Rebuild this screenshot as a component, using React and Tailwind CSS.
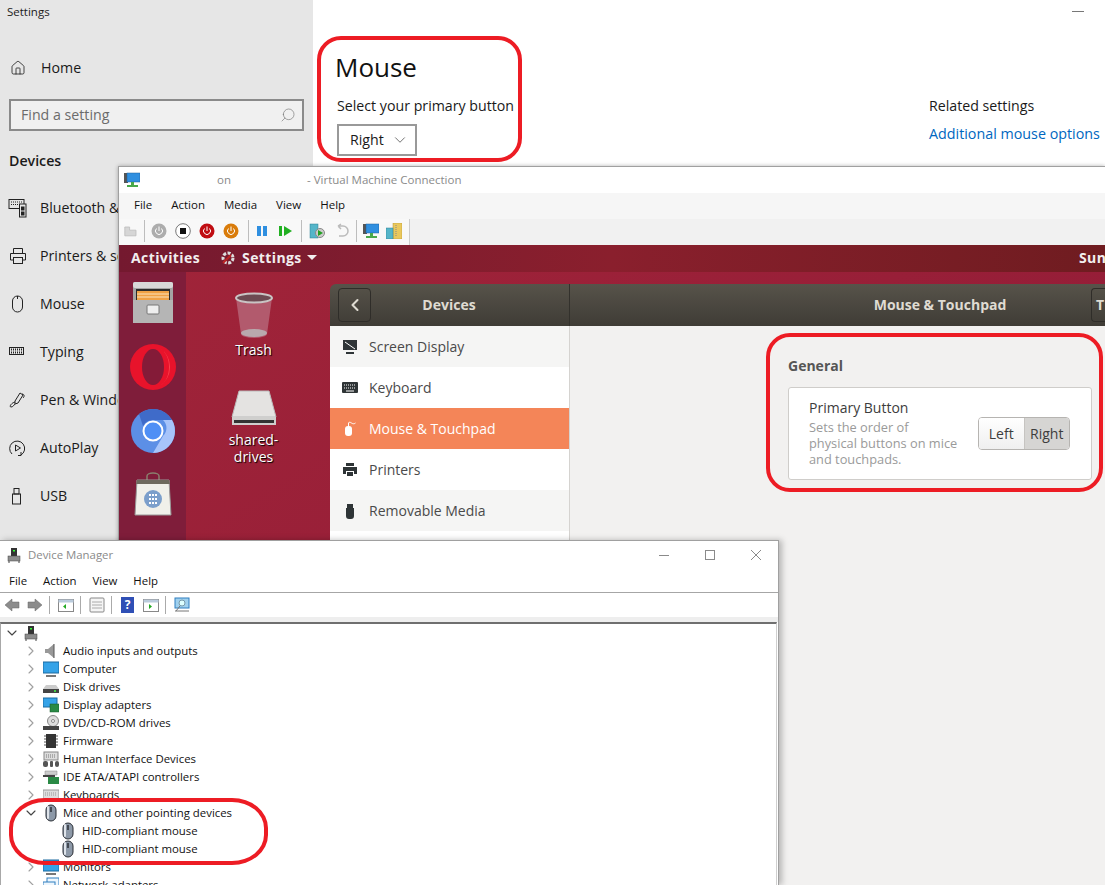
import React from 'react';
import { ChevronRight, ChevronDown, ChevronLeft, Search, Home } from 'lucide-react';

const segoe = { fontFamily: '"Open Sans", "Noto Sans", sans-serif' };

const Win = ({ children, className = '' }) => (
  <svg viewBox="0 0 20 20" fill="none" stroke="#222" strokeWidth="1" className={`w-5 h-5 ${className}`}>{children}</svg>
);

const sideItems = [
  {
    label: 'Bluetooth & other devices',
    icon: <Win><rect x="1" y="1.500" width="15" height="9" /><path d="M3 4h11M3 6.500h11" strokeDasharray="1 1" /><rect x="11.500" y="6" width="6.500" height="13" fill="#e6e6e6" /><rect x="13.500" y="9" width="2.500" height="3" fill="#222" /><rect x="13.500" y="14" width="2.500" height="3" fill="#222" /></Win>,
  },
  {
    label: 'Printers & scanners',
    icon: <Win><path d="M5.500 7V2.500h9V7M5.500 14H2.500V7.500h15V14h-3" /><rect x="5.500" y="11.500" width="9" height="6" /></Win>,
  },
  {
    label: 'Mouse',
    icon: <Win><rect x="4.500" y="2" width="10" height="16" rx="5" /><path d="M9.500 2v3" /></Win>,
  },
  {
    label: 'Typing',
    icon: <Win><rect x="1.500" y="5.500" width="14" height="7" /><path d="M3 7.500h11M3 10.500h11" strokeWidth="2" strokeDasharray="1 1" /></Win>,
  },
  {
    label: 'Pen & Windows Ink',
    icon: <Win><path d="M7 11l5-8 3 2-5 8-3 1z" /><path d="M7 12c-4 1-6 5-4 5 2 0 3-2 4-3M14 4c2 0 3 2 1 4" /></Win>,
  },
  {
    label: 'AutoPlay',
    icon: <Win><path d="M4 16A7.500 7.500 0 1 1 13 17" /><path d="M7.500 7v6l5-3z" /><path d="M13 14v3.500h-3" /></Win>,
  },
  {
    label: 'USB',
    icon: <Win><rect x="4.500" y="8" width="8" height="10" /><rect x="6" y="2.500" width="5" height="5.500" /></Win>,
  },
];

const SettingsSidebar = () => (
  <aside className="w-[313px] h-full shrink-0 bg-[#e6e6e6] text-[#1a1a1a]">
    <div className="h-[44px] pl-[7px] text-[11.500px] leading-[24px]">Settings</div>
    <div className="h-[48px] flex items-center pl-[10px] gap-[15px] text-[14.200px]">
      <Home className="w-4 h-4" strokeWidth={1.200} />
      <span>Home</span>
    </div>
    <div className="mx-[9px] mt-[7px] h-[32px] border-2 border-[#8a8a8a] bg-[#f0f0f0] flex items-center justify-between pl-[10px] pr-[6px] text-[14.200px] text-[#6b6b6b]">
      <span>Find a setting</span>
      <Search className="w-4 h-4 -scale-x-100 text-[#777]" strokeWidth={1} />
    </div>
    <div className="pl-[9px] mt-[19px] h-[22px] leading-[22px] text-[14.200px] font-semibold">Devices</div>
    <div className="mt-[12px]">
      {sideItems.map((item) => (
        <div key={item.label} className="h-[48px] flex items-center pl-[8px] gap-[12px] text-[14.200px] whitespace-nowrap">
          {item.icon}
          <span>{item.label}</span>
        </div>
      ))}
    </div>
  </aside>
);

const MouseMain = () => (
  <main className="flex-1 h-full bg-white relative text-[#1a1a1a]">
    <div className="flex justify-end pr-[21px] pt-[11px]">
      <div className="w-[12px] h-px bg-[#777]" />
    </div>
    <div className="flex pt-[28px]">
      <div className="w-[616px] pl-[22px]">
        <div className="text-[26px] leading-[54px] pb-[2px] text-[#111]">Mouse</div>
        <div className="pl-[2px] text-[14.200px] leading-[20px] whitespace-nowrap">Select your primary button</div>
        <div className="ml-[2px] mt-[8px] w-[80px] h-[32px] border-2 border-[#999] flex items-center justify-between pl-[11px] pr-[6px] text-[14.200px]">
          <span>Right</span>
          <ChevronDown className="w-[18px] h-[18px] text-[#444]" strokeWidth={1} />
        </div>
      </div>
      <div className="pt-[56px] whitespace-nowrap">
        <div className="text-[14.200px] leading-[20px]">Related settings</div>
        <div className="mt-[8px] text-[14.300px] leading-[20px] text-[#0067c0]">Additional mouse options</div>
      </div>
    </div>
  </main>
);

const Power = ({ bg, ring = 'none', fg = '#fff' }) => (
  <svg viewBox="0 0 16 16" className="w-4 h-4">
    <circle cx="8" cy="8" r="7.500" fill={bg} stroke={ring} />
    <path d="M5.500 5.500a3.500 3.500 0 1 0 5 0M8 3.500V8" fill="none" stroke={fg} strokeWidth="1" />
  </svg>
);

const Sep = () => <div className="w-px h-[22px] bg-[#bdbdbd]" />;

const Net = () => (
  <svg viewBox="0 0 16 16" className="w-4 h-4">
    <rect x="0" y="1" width="4" height="10" fill="#555" />
    <rect x="3" y="1" width="13" height="9" fill="#2f8fe0" stroke="#1c5f9c" strokeWidth=".5" />
    <rect x="7" y="10" width="3" height="3" fill="#49a84a" />
    <rect x="3" y="13" width="11" height="2" fill="#49a84a" />
  </svg>
);

const VmToolbar = () => (
  <div className="h-[26px] shrink-0 flex bg-[#f1f1f1]">
    <div className="w-[291px] h-full bg-[#f8f8f8] border-r border-[#ccc] flex items-center pl-[5px] pb-[2px]">
      <svg viewBox="0 0 16 16" className="w-4 h-4 mr-[7px]">
        <path d="M1 7V3h6v4h8v7H1z" fill="#d6d6d6" stroke="#bbb" />
      </svg>
      <Sep />
      <div className="flex items-center gap-[8px] ml-[6px] mr-[9px]">
        <Power bg="#adadad" />
        <svg viewBox="0 0 16 16" className="w-4 h-4"><circle cx="8" cy="8" r="7.300" fill="#fff" stroke="#777" /><rect x="5" y="5" width="6" height="6" fill="#111" /></svg>
        <Power bg="#c00d12" />
        <Power bg="#d97c0b" />
      </div>
      <Sep />
      <div className="flex items-center gap-[8px] ml-[6px] mr-[7px]">
        <svg viewBox="0 0 16 16" className="w-4 h-4"><rect x="3" y="3" width="4" height="10" fill="#2f8fe0" /><rect x="9" y="3" width="4" height="10" fill="#2f8fe0" /></svg>
        <svg viewBox="0 0 16 16" className="w-4 h-4"><rect x="1" y="3" width="3" height="10" fill="#22b022" /><path d="M6 3l8 5-8 5z" fill="#22b022" /></svg>
      </div>
      <Sep />
      <div className="flex items-center gap-[8px] ml-[7px] mr-[7px]">
        <svg viewBox="0 0 16 16" className="w-4 h-4"><rect x="1" y="1" width="8" height="14" fill="#55b5c9" stroke="#2c7f92" strokeWidth=".5" /><circle cx="11" cy="10" r="4.500" fill="#ccc" stroke="#888" /><path d="M9 7l5 3-5 3z" fill="#22a022" /></svg>
        <svg viewBox="0 0 16 16" className="w-4 h-4"><path d="M5 3h5a3.500 3.500 0 0 1 0 10H6M5 3l3-2M5 3l3 3" fill="none" stroke="#bbb" strokeWidth="1.500" /></svg>
      </div>
      <Sep />
      <div className="flex items-center gap-[7px] ml-[6px] mr-[7px]">
        <Net />
        <svg viewBox="0 0 16 16" className="w-4 h-4"><rect x="7" y="0" width="9" height="16" fill="#eac85c" stroke="#b59430" strokeWidth=".5" /><rect x="0" y="5" width="7" height="11" fill="#55b5c9" stroke="#2c7f92" strokeWidth=".5" /><path d="M10 2v12" stroke="#888" strokeDasharray="1 1" /></svg>
      </div>
    </div>
  </div>
);

const Dock = () => (
  <div className="w-[67px] h-full bg-[#7f1d3a] flex flex-col items-center pt-[9px] shrink-0">
    <svg viewBox="0 0 44 44" className="w-[44px] h-[44px] shrink-0">
      <rect x="2" y="1" width="40" height="41" rx="2" fill="#a4a4a4" />
      <rect x="2" y="1" width="40" height="6" rx="2" fill="#d8d8d8" />
      <rect x="5" y="8" width="34" height="11" fill="#2b2b2b" />
      <rect x="6" y="10" width="32" height="9" fill="#f0a145" />
      <path d="M6 13h32M6 16h32" stroke="#fbe2bd" />
      <rect x="2" y="19" width="40" height="23" fill="#b5b5b5" />
      <rect x="16" y="24" width="12" height="9" rx="1" fill="#eee" stroke="#777" />
    </svg>
    <svg viewBox="0 0 46 46" className="w-[46px] h-[46px] mt-[19px] shrink-0">
      <circle cx="23" cy="23" r="23" fill="#e8132b" />
      <ellipse cx="23" cy="23" rx="11" ry="18" fill="#841b38" />
      <path d="M30 4a23 23 0 0 1 0 38c6-4 9-11 9-19s-3-15-9-19z" fill="#f9434f" />
    </svg>
    <svg viewBox="0 0 44 44" className="w-[44px] h-[44px] mt-[19px] shrink-0">
      <circle cx="22" cy="22" r="22" fill="#5c8fe6" />
      <path d="M8 5a22 22 0 0 1 33 6H22a11 11 0 0 0-10 6z" fill="#3f6bc9" />
      <path d="M41 11a22 22 0 0 1-19 33l10-17a11 11 0 0 0 0-16z" fill="#a7c4fa" />
      <circle cx="22" cy="22" r="9.500" fill="#4f8ff5" stroke="#fff" strokeWidth="2" />
    </svg>
    <svg viewBox="0 0 38 44" className="w-[38px] h-[44px] mt-[19px] shrink-0">
      <path d="M13 8V4a6 3 0 0 1 12 0v4" fill="none" stroke="#8a7f6e" strokeWidth="1.500" />
      <path d="M3 8h32l2 35H1z" fill="#f0f0ea" stroke="#999" />
      <path d="M3 8h32l1 4H2z" fill="#6e6a5e" />
      <circle cx="19" cy="27" r="9" fill="#7b9fcb" />
      <path d="M15 23h8M15 27h8M15 31h8" stroke="#fff" strokeWidth="2" strokeDasharray="2 1" />
    </svg>
  </div>
);

const DesktopLabel = ({ children }) => (
  <span className="text-[14px] leading-[17px] text-white text-center [text-shadow:1px_1px_1px_#000] w-[70px]">{children}</span>
);

const GnomeSidebar = () => {
  const rows = [
    { label: 'Screen Display', tint: 'bg-[#f5f5f4] text-[#4a4a4a]', icon: <svg viewBox="0 0 16 16" className="w-4 h-4"><path d="M1 1h14v10H1zM4 13h8v2H4z" fill="#2e3436" /><path d="M3 3l10 7" stroke="#fff" /></svg> },
    { label: 'Keyboard', tint: 'bg-white text-[#4a4a4a]', icon: <svg viewBox="0 0 16 16" className="w-4 h-4"><rect y="2" width="16" height="11" rx="1" fill="#2e3436" /><path d="M2 5h12M2 8h12" stroke="#fff" strokeDasharray="1 1" /><path d="M4 11h8" stroke="#fff" /></svg> },
    { label: 'Mouse & Touchpad', tint: 'bg-[#f48558] text-white', icon: <svg viewBox="0 0 16 16" className="w-4 h-4"><rect x="3" y="5" width="7" height="10" rx="3" fill="#fff" /><path d="M6.500 5V2c0-1 2-1 3 0s3 1 4 0" fill="none" stroke="#fff" /></svg> },
    { label: 'Printers', tint: 'bg-white text-[#4a4a4a]', icon: <svg viewBox="0 0 16 16" className="w-4 h-4"><path d="M4 1h8v3H4zM1 5h14v7h-3V9H4v3H1z" fill="#2e3436" /><rect x="5" y="10" width="6" height="4" fill="#2e3436" /></svg> },
    { label: 'Removable Media', tint: 'bg-[#f5f5f4] text-[#4a4a4a]', icon: <svg viewBox="0 0 16 16" className="w-4 h-4"><path d="M5 1h6v4H5zM4 5h8v8a3 3 0 0 1-3 3H7a3 3 0 0 1-3-3z" fill="#2e3436" /></svg> },
  ];
  return (
    <div className="w-[240px] h-full bg-white border-r border-[#d5d3d0] shrink-0">
      {rows.map((row) => (
        <div key={row.label} className={`h-[41px] flex items-center pl-[12px] gap-[11px] text-[14px] ${row.tint}`}>
          {row.icon}
          <span>{row.label}</span>
        </div>
      ))}
    </div>
  );
};

const GnomeSettings = () => (
  <div className="flex-1 h-full pt-[12px] min-w-0">
    <div className="h-full flex flex-col overflow-hidden rounded-tl-[6px]">
      <div className="h-[42px] shrink-0 flex bg-gradient-to-b from-[#57534a] to-[#3f3c36] text-[#dfdbd2] text-[14px] font-bold">
        <div className="w-[240px] shrink-0 flex items-center pl-[8px] border-r border-[#33312c]">
          <div className="w-[33px] h-[34px] shrink-0 rounded-[4px] border border-[#2f2d29] flex items-center justify-center">
            <ChevronLeft className="w-5 h-5" strokeWidth={2.500} />
          </div>
          <div className="w-[156px] text-center pb-[2px]">Devices</div>
        </div>
        <div className="flex-1 flex items-center">
          <div className="flex-1 text-center pl-[219px] pb-[2px]">Mouse &amp; Touchpad</div>
          <div className="w-[14px] h-[34px] rounded-l-[4px] border border-r-0 border-[#2f2d29] pl-[4px] leading-[32px] overflow-hidden">T</div>
        </div>
      </div>
      <div className="flex-1 flex min-h-0">
        <GnomeSidebar />
        <div className="flex-1 bg-[#f2f1f0] pl-[218px] pt-[30px]">
          <div className="text-[14px] font-bold leading-[20px] text-[#555]">General</div>
          <div className="mt-[11px] w-[304px] h-[93px] bg-white border border-[#cfcdca] rounded-[3px] flex items-center pl-[20px] pr-[21px] justify-between">
            <div className="pb-[2px]">
              <div className="text-[14px] leading-[20px] text-[#3d3d3d]">Primary Button</div>
              <div className="text-[12.800px] leading-[16px] text-[#9a9a9a] mt-[1px] whitespace-nowrap">
                <div>Sets the order of</div>
                <div>physical buttons on mice</div>
                <div>and touchpads.</div>
              </div>
            </div>
            <div className="flex h-[33px] w-[92px] shrink-0 rounded-[4px] border border-[#b6b4b1] text-[14px] text-[#3d3d3d] overflow-hidden">
              <div className="flex-1 bg-gradient-to-b from-white to-[#efefef] flex items-center justify-center">Left</div>
              <div className="flex-1 bg-[#d6d5d3] flex items-center justify-center border-l border-[#c6c4c1]">Right</div>
            </div>
          </div>
        </div>
      </div>
    </div>
  </div>
);

const VmWindow = () => (
  <div className="absolute left-[118px] top-[166px] right-0 bottom-0 bg-white border-l border-t border-[#a0a0a0] flex flex-col shadow-[0_0_4px_rgba(0,0,0,0.3)]">
    <div className="h-[26px] shrink-0 flex items-center pl-[5px] text-[11.500px] text-[#8a8a8a] whitespace-nowrap">
      <Net />
      <span className="ml-[77px]">on</span>
      <span className="ml-[76px]">- Virtual Machine Connection</span>
    </div>
    <div className="h-[26px] shrink-0 bg-[#f6f6f6] flex items-center pl-[15px] pb-[2px] gap-[19px] text-[11.500px] text-[#111]">
      {['File', 'Action', 'Media', 'View', 'Help'].map((m) => <span key={m}>{m}</span>)}
    </div>
    <VmToolbar />
    <div className="h-[27px] shrink-0 bg-gradient-to-r from-[#74192f] via-[#8a1f2d] to-[#6f1c20] flex items-center pl-[12px] pb-[2px] text-[14px] font-bold tracking-[0.4px] text-[#f2eeee] whitespace-nowrap">
      <span>Activities</span>
      <svg viewBox="0 0 16 16" className="w-4 h-4 ml-[20px] mr-[6px]"><circle cx="8" cy="8" r="5" fill="none" stroke="#ddd" strokeWidth="3" strokeDasharray="3 1.500" /><path d="M3 13l8-8" stroke="#b22" strokeWidth="2" /></svg>
      <span>Settings</span>
      <span className="ml-[5px] w-0 h-0 border-x-[5px] border-x-transparent border-t-[5px] border-t-[#f2eeee]" />
      <span className="ml-auto w-[26px] overflow-hidden">Sun</span>
    </div>
    <div className="flex-1 flex min-h-0 bg-gradient-to-br from-[#a02439] to-[#8c1736]">
      <Dock />
      <div className="w-[144px] h-full shrink-0 flex flex-col items-center pt-[20px] pr-[9px]">
        <svg viewBox="0 0 40 46" className="w-[40px] h-[46px] shrink-0">
          <path d="M2 6l5 36a13 4 0 0 0 26 0l5-36z" fill="#b25a6d" />
          <ellipse cx="20" cy="41" rx="13" ry="4" fill="#b9a9ad" />
          <ellipse cx="20" cy="6" rx="18" ry="4.500" fill="#6d4a52" stroke="#c9c4c4" strokeWidth="2" />
        </svg>
        <div className="-mt-[1px]"><DesktopLabel>Trash</DesktopLabel></div>
        <svg viewBox="0 0 46 36" className="w-[46px] h-[36px] mt-[29px] shrink-0">
          <path d="M8 1h30l7 26H1z" fill="#e4e3e1" stroke="#bbb" />
          <rect x="1" y="27" width="44" height="8" fill="#cfcfcd" />
          <rect x="3" y="30" width="40" height="3" fill="#333" />
        </svg>
        <div className="mt-[5px] flex flex-col items-center"><DesktopLabel>shared-</DesktopLabel><DesktopLabel>drives</DesktopLabel></div>
      </div>
      <GnomeSettings />
    </div>
  </div>
);

const MiniMouse = () => (
  <svg viewBox="0 0 12 18" className="w-[12px] h-[18px]">
    <rect x="1" y="1" width="10" height="16" rx="5" fill="#8d99a8" stroke="#2b2f36" />
    <path d="M6 3v5" stroke="#2b2f36" strokeWidth="1.500" />
    <rect x="2" y="2" width="2" height="13" rx="1" fill="#dfe4ea" />
  </svg>
);

const Tiny = ({ type }) => {
  const base = 'w-[16px] h-[16px]';
  if (type === 'audio') return <svg viewBox="0 0 16 16" className={base}><path d="M2 6h3l6-5v14l-6-5H2z" fill="#999" /><path d="M11 1v14" stroke="#555" /></svg>;
  if (type === 'computer') return <svg viewBox="0 0 16 16" className={base}><rect x="0" y="1" width="16" height="11" fill="#35a3e8" stroke="#1c6aa0" /><path d="M3 15h10" stroke="#777" strokeWidth="2" /></svg>;
  if (type === 'disk') return <svg viewBox="0 0 16 16" className={base}><path d="M3 6h10l3 4H0z" fill="#ccc" /><rect y="10" width="16" height="4" fill="#444" /><rect x="11" y="11" width="2" height="2" fill="#4c4" /></svg>;
  if (type === 'display') return <svg viewBox="0 0 16 16" className={base}><rect x="0" y="1" width="14" height="9" fill="#35a3e8" stroke="#1c6aa0" /><rect x="7" y="7" width="9" height="8" fill="#2a8a45" stroke="#15592a" strokeWidth=".5" /></svg>;
  if (type === 'dvd') return <svg viewBox="0 0 16 16" className={base}><circle cx="10" cy="6" r="5.500" fill="#ddd" stroke="#888" /><circle cx="10" cy="6" r="1.500" fill="#fff" stroke="#888" /><rect y="11" width="16" height="4" fill="#444" /></svg>;
  if (type === 'firmware') return <svg viewBox="0 0 16 16" className={base}><rect x="3" y="1" width="10" height="14" fill="#333" /><path d="M1 3h14M1 6h14M1 9h14M1 12h14" stroke="#555" strokeDasharray="2 10" /></svg>;
  if (type === 'hid') return <svg viewBox="0 0 16 16" className={base}><rect x="1" y="1" width="14" height="8" fill="#ddd" stroke="#888" /><path d="M3 4h10M3 6h10" stroke="#777" strokeDasharray="1 1" /><rect x="0" y="10" width="5" height="6" rx="2" fill="#555" /><rect x="7" y="10" width="3" height="6" rx="1" fill="#555" /><rect x="12" y="10" width="4" height="6" rx="2" fill="#555" /></svg>;
  if (type === 'ide') return <svg viewBox="0 0 16 16" className={base}><path d="M2 2h12v4H2z" fill="#ccc" stroke="#888" strokeWidth=".5" /><rect x="0" y="6" width="12" height="2" fill="#444" /><rect x="5" y="8" width="11" height="7" fill="#2a8a45" /></svg>;
  if (type === 'kb') return <svg viewBox="0 0 16 16" className={base}><rect x="0" y="3" width="16" height="10" fill="#ddd" stroke="#999" /><path d="M2 6h12M2 8h12" stroke="#999" strokeDasharray="1 1" /></svg>;
  if (type === 'net') return <svg viewBox="0 0 16 16" className={base}><rect x="4" y="1" width="12" height="9" fill="#eef6fd" stroke="#2f7fc0" /><rect x="0" y="5" width="12" height="9" fill="#eef6fd" stroke="#2f7fc0" /></svg>;
  return null;
};

const treeTop = [
  ['Audio inputs and outputs', 'audio'],
  ['Computer', 'computer'],
  ['Disk drives', 'disk'],
  ['Display adapters', 'display'],
  ['DVD/CD-ROM drives', 'dvd'],
  ['Firmware', 'firmware'],
  ['Human Interface Devices', 'hid'],
  ['IDE ATA/ATAPI controllers', 'ide'],
  ['Keyboards', 'kb'],
];

const PcIcon = () => (
  <svg viewBox="0 0 14 16" className="w-[14px] h-[16px]">
    <rect x="4" y="1" width="6" height="8" fill="#333" />
    <rect x="6" y="3" width="2" height="1.500" fill="#3f3" />
    <rect x="1" y="9" width="12" height="5" fill="#8c8c8c" stroke="#444" strokeWidth=".5" />
    <path d="M2 16v-2M12 16v-2" stroke="#444" />
  </svg>
);

const Row = ({ label, type }) => (
  <div className="h-[18px] flex items-center whitespace-nowrap">
    <ChevronRight className="w-[16px] h-[16px] ml-[22px] text-[#a0a0a0]" strokeWidth={1.700} />
    <div className="w-[16px] h-[16px] ml-[4px] flex items-center justify-center"><Tiny type={type} /></div>
    <span className="ml-[4px]">{label}</span>
  </div>
);

const DmToolbar = () => (
  <div className="h-[25px] shrink-0 flex items-center pl-[4px] border-t border-[#a6a6a6] bg-white">
    <svg viewBox="0 0 16 16" className="w-4 h-4 mr-[7px]"><path d="M1 8l7-6v3h7v6H8v3z" fill="#8c8c8c" stroke="#666" strokeWidth=".5" /></svg>
    <svg viewBox="0 0 16 16" className="w-4 h-4 mr-[6px]"><path d="M15 8L8 2v3H1v6h7v3z" fill="#8c8c8c" stroke="#666" strokeWidth=".5" /></svg>
    <div className="w-px h-[18px] bg-[#aaa] mr-[8px]" />
    <svg viewBox="0 0 16 16" className="w-4 h-4 mr-[6px]"><rect x=".5" y="2.500" width="15" height="12" fill="#fff" stroke="#888" /><rect x=".5" y="2.500" width="15" height="3" fill="#bcd" /><path d="M8 7v5L5 9.500z" fill="#2a2" /></svg>
    <div className="w-px h-[18px] bg-[#aaa] mr-[8px]" />
    <svg viewBox="0 0 16 16" className="w-4 h-4 mr-[6px]"><rect x="1" y="1" width="14" height="14" rx="1" fill="#f5f5f5" stroke="#888" /><path d="M3 5h10M3 8h10M3 11h10" stroke="#aaa" /></svg>
    <div className="w-px h-[18px] bg-[#aaa] mr-[9px]" />
    <div className="w-[13px] h-[16px] bg-[#2f4fb5] text-white text-[12px] font-bold leading-[16px] text-center mr-[9px]">?</div>
    <svg viewBox="0 0 16 16" className="w-4 h-4 mr-[6px]"><rect x=".5" y="2.500" width="15" height="12" fill="#fff" stroke="#888" /><rect x=".5" y="2.500" width="15" height="3" fill="#bcd" /><path d="M6 7v5l3-2.500z" fill="#2a2" /></svg>
    <div className="w-px h-[18px] bg-[#aaa] mr-[8px]" />
    <svg viewBox="0 0 16 16" className="w-4 h-4"><rect x="1" y="1" width="14" height="10" fill="#9fd0ee" stroke="#2f7fc0" /><circle cx="8" cy="6" r="3" fill="#dff" stroke="#79a" /><path d="M6 9l-4 5M1 14h14" stroke="#777" /></svg>
  </div>
);

const DeviceManager = () => (
  <div className="absolute left-0 top-[540px] w-[779px] bottom-0 bg-white border-r border-t border-[#a0a0a0] shadow-[3px_0_6px_rgba(0,0,0,0.25)] flex flex-col text-[11.400px] text-[#111]">
    <div className="h-[28px] shrink-0 flex items-center pl-[7px] text-[#8a8a8a]">
      <PcIcon />
      <span className="ml-[7px]">Device Manager</span>
      <div className="ml-auto flex items-center gap-[36px] pr-[17px]">
        <div className="w-[10px] h-px bg-[#8a8a8a]" />
        <div className="w-[10px] h-[10px] border border-[#8a8a8a]" />
        <svg viewBox="0 0 10 10" className="w-[10px] h-[10px]"><path d="M0 0l10 10M10 0L0 10" stroke="#8a8a8a" /></svg>
      </div>
    </div>
    <div className="h-[23px] shrink-0 flex items-center pl-[9px] gap-[16px]">
      {['File', 'Action', 'View', 'Help'].map((m) => <span key={m}>{m}</span>)}
    </div>
    <DmToolbar />
    <div className="h-[5px] shrink-0 bg-[#eeeeee]" />
    <div className="flex-1 min-h-0 mr-[1px] border-t-2 border-[#6f6f6f] border-l border-r border-l-[#a8a8a8] border-r-[#cfcfcf] overflow-hidden">
      <div className="h-[18px] flex items-center">
        <ChevronDown className="w-[16px] h-[16px] ml-[3px] text-[#444]" strokeWidth={1.700} />
        <div className="ml-[4px]"><PcIcon /></div>
      </div>
      {treeTop.map(([label, type]) => <Row key={label} label={label} type={type} />)}
      <div className="h-[18px] flex items-center bg-white relative">
        <ChevronDown className="w-[16px] h-[16px] ml-[22px] text-[#444]" strokeWidth={1.700} />
        <div className="w-[16px] h-[16px] ml-[4px] flex items-center justify-center"><MiniMouse /></div>
        <span className="ml-[4px]">Mice and other pointing devices</span>
      </div>
      {[0, 1].map((i) => (
        <div key={i} className="h-[18px] flex items-center pl-[61px]">
          <MiniMouse />
          <span className="ml-[8px]">HID-compliant mouse</span>
        </div>
      ))}
      <Row label="Monitors" type="computer" />
      <Row label="Network adapters" type="net" />
    </div>
  </div>
);

export default function App() {
  return (
    <div className="relative w-[1105px] h-[885px] overflow-hidden flex bg-white" style={segoe}>
      <SettingsSidebar />
      <MouseMain />
      <VmWindow />
      <DeviceManager />
      {/* red marker rings drawn over the screenshot */}
      <div className="absolute left-[317px] top-[36px] w-[205px] h-[126px] border-[4px] border-[#ed1c24] rounded-[24px]" />
      <div className="absolute left-[766px] top-[333px] w-[337px] h-[159px] border-[4px] border-[#ed1c24] rounded-[24px]" />
      <div className="absolute left-[9px] top-[798px] w-[259px] h-[67px] border-[4px] border-[#ed1c24] rounded-[36px/30px]" />
    </div>
  );
}
